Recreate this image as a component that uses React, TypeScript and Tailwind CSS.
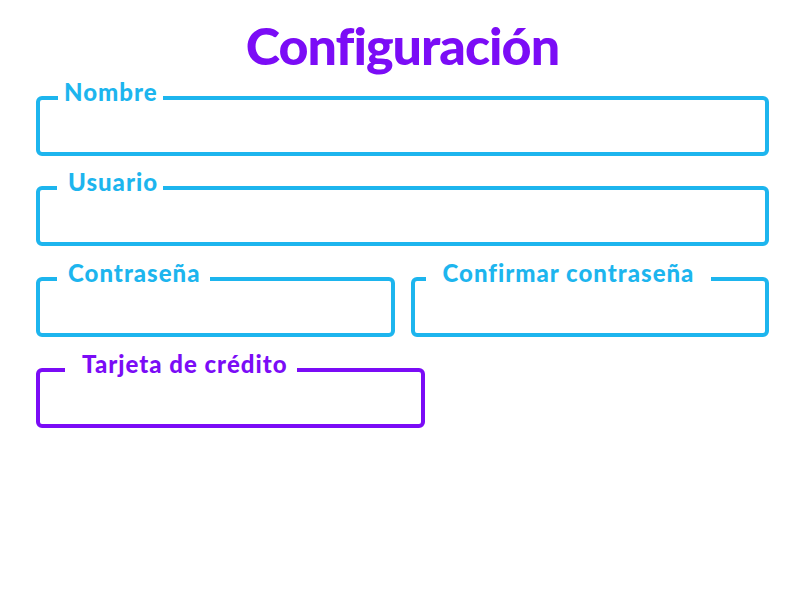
import React from 'react';

type FieldProps = {
  label: string;
  color: 'blue' | 'purple';
  legendClass: string;
  className?: string;
};

const Field: React.FC<FieldProps> = ({ label, color, legendClass, className }) => {
  const border = color === 'blue' ? 'border-[#1db5ee]' : 'border-[#7b0cf6]';
  const text = color === 'blue' ? 'text-[#1db5ee]' : 'text-[#7b0cf6]';
  return (
    <div className={`h-[60px] rounded-[6px] border-4 ${border} ${className ?? ''}`}>
      <span
        className={`-mt-[20px] block bg-white text-[24px] font-black leading-[24px] tracking-[1px] whitespace-nowrap ${text} ${legendClass}`}
      >
        {label}
      </span>
    </div>
  );
};

export default function App() {
  return (
    <div
      className="min-h-[590px] w-full bg-white pl-9 pr-[35px]"
      style={{ fontFamily: 'Lato, "Noto Sans", sans-serif' }}
    >
      <h1 className="pt-[19px] text-center text-[52px] font-black leading-[52px] tracking-[-1px] text-[#7b0cf6]">
        Configuración
      </h1>

      <Field label="Nombre" color="blue" legendClass="ml-[18px] w-[105px] pl-[6px]" className="mt-[25px]" />
      <Field label="Usuario" color="blue" legendClass="ml-[17px] w-[106px] pl-[11px]" className="mt-[30px]" />

      <div className="mt-[31px] grid grid-cols-2 gap-[16px]">
        <Field label="Contraseña" color="blue" legendClass="ml-[17px] w-[153px] pl-[11px]" />
        <Field label="Confirmar contraseña" color="blue" legendClass="ml-[11px] w-[285px] pl-[17px]" />
      </div>

      <Field
        label="Tarjeta de crédito"
        color="purple"
        legendClass="ml-[25px] w-[232px] pl-[17px]"
        className="mt-[31px] w-[389px]"
      />
    </div>
  );
}
